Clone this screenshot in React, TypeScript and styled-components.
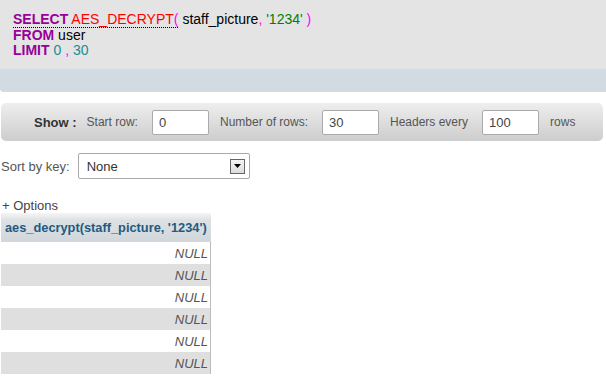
import React from "react";
import styled, { createGlobalStyle } from "styled-components";

const GlobalStyle = createGlobalStyle`
  body {
    margin: 0;
    background: #fff;
    font-family: "Liberation Sans", Arial, sans-serif;
    font-size: 13px;
    color: #444;
  }
`;

const Page = styled.div`
  width: 606px;
`;

const QueryBox = styled.div`
  background: #e4e4e4;
  border-radius: 0 0 0 4px;
  overflow: hidden;
`;

const Code = styled.div`
  padding: 12px 13px 9px;
  height: 48px;
  font-size: 14px;
  line-height: 15.5px;
  color: #000;
`;

const QueryFooter = styled.div`
  background: #d3dbe2;
  height: 23px;
`;

const Keyword = styled.span`
  color: #990099;
  font-weight: bold;
`;

const Func = styled.span`
  color: #ff0000;
`;

const Punct = styled.span`
  color: #ff00ff;
`;

const Str = styled.span`
  color: #008000;
`;

const Num = styled.span`
  color: #1b8c99;
`;

const DocLink = styled.span`
  border-bottom: 1px dotted #000;
`;

const ShowBar = styled.form`
  margin: 11px 3px 0 1px;
  height: 38px;
  box-sizing: border-box;
  border-radius: 5px;
  background: linear-gradient(#eeeeee, #cdcdcd);
  display: flex;
  align-items: center;
  padding-left: 33px;
  font-size: 12px;
`;

const ShowLabel = styled.span`
  font-weight: bold;
  font-size: 13px;
  color: #333;
  margin-right: 10px;
`;

const BarLabel = styled.span`
  color: #555;
  margin-right: 14px;
`;

const NumberInput = styled.input`
  width: 57px;
  height: 25px;
  box-sizing: border-box;
  border: 1px solid #aaa;
  border-radius: 2px;
  background: #fff;
  font-family: inherit;
  font-size: 13px;
  color: #444;
  padding: 0 6px;
  margin-right: 11px;
`;

const SortRow = styled.div`
  display: flex;
  align-items: center;
  gap: 8px;
  margin: 12px 0 0 1px;
`;

const SortLabel = styled.label`
  color: #555;
`;

const SelectBox = styled.div`
  width: 172px;
  height: 26px;
  box-sizing: border-box;
  border: 1px solid #aaa;
  border-radius: 2px;
  background: #fff;
  display: flex;
  align-items: center;
  justify-content: space-between;
  padding: 0 4px 0 8px;
  color: #333;
`;

const ArrowBox = styled.span`
  width: 15px;
  height: 15px;
  box-sizing: border-box;
  border: 1px solid #666;
  background: linear-gradient(#f4f4f4, #dcdcdc);
  display: flex;
  align-items: center;
  justify-content: center;
`;

const Options = styled.div`
  margin: 19px 0 0 2px;
  color: #444;
  line-height: 15px;
`;

const Table = styled.table`
  margin: 0 0 0 1px;
  border-collapse: collapse;
  width: 210px;
`;

const HeadCell = styled.th`
  height: 29px;
  padding: 0 3px 0 4px;
  background: linear-gradient(#f5f5f5 0, #dde1e4 25%, #d1d7dc 100%);
  color: #235a81;
  font-weight: bold;
  font-size: 12.8px;
  text-align: left;
  white-space: nowrap;
`;

const Row = styled.tr<{ $odd: boolean }>`
  background: ${(p) => (p.$odd ? "#dfdfdf" : "#fff")};
`;

const NullCell = styled.td`
  height: 22px;
  padding: 0 2px 0 0;
  text-align: right;
  font-style: italic;
  color: #555;
  border-right: 1px solid #bbb;
`;

export default function App() {
  const rows = [0, 1, 2, 3, 4, 5];
  return (
    <Page>
      <GlobalStyle />
      <QueryBox>
        <Code>
          <div>
            <DocLink>
              <Keyword>SELECT</Keyword> <Func>AES_DECRYPT</Func>
              <Punct>(</Punct>
            </DocLink>{" "}
            staff_picture<Punct>,</Punct> <Str>'1234'</Str> <Punct>)</Punct>
          </div>
          <div>
            <Keyword>FROM</Keyword> user
          </div>
          <div>
            <Keyword>LIMIT</Keyword> <Num>0</Num> <Punct>,</Punct> <Num>30</Num>
          </div>
        </Code>
        <QueryFooter />
      </QueryBox>

      <ShowBar>
        <ShowLabel>Show :</ShowLabel>
        <BarLabel>Start row:</BarLabel>
        <NumberInput defaultValue="0" />
        <BarLabel>Number of rows:</BarLabel>
        <NumberInput defaultValue="30" />
        <BarLabel>Headers every</BarLabel>
        <NumberInput defaultValue="100" />
        <BarLabel>rows</BarLabel>
      </ShowBar>

      <SortRow>
        <SortLabel>Sort by key:</SortLabel>
        <SelectBox>
          <span>None</span>
          <ArrowBox>
            <svg width="7" height="4" viewBox="0 0 7 4">
              <path d="M0 0h7L3.5 4z" fill="#000" />
            </svg>
          </ArrowBox>
        </SelectBox>
      </SortRow>

      <Options>+ Options</Options>
      <Table>
        <thead>
          <tr>
            <HeadCell>aes_decrypt(staff_picture, '1234')</HeadCell>
          </tr>
        </thead>
        <tbody>
          {rows.map((r) => (
            <Row key={r} $odd={r % 2 === 1}>
              <NullCell>NULL</NullCell>
            </Row>
          ))}
        </tbody>
      </Table>
    </Page>
  );
}
